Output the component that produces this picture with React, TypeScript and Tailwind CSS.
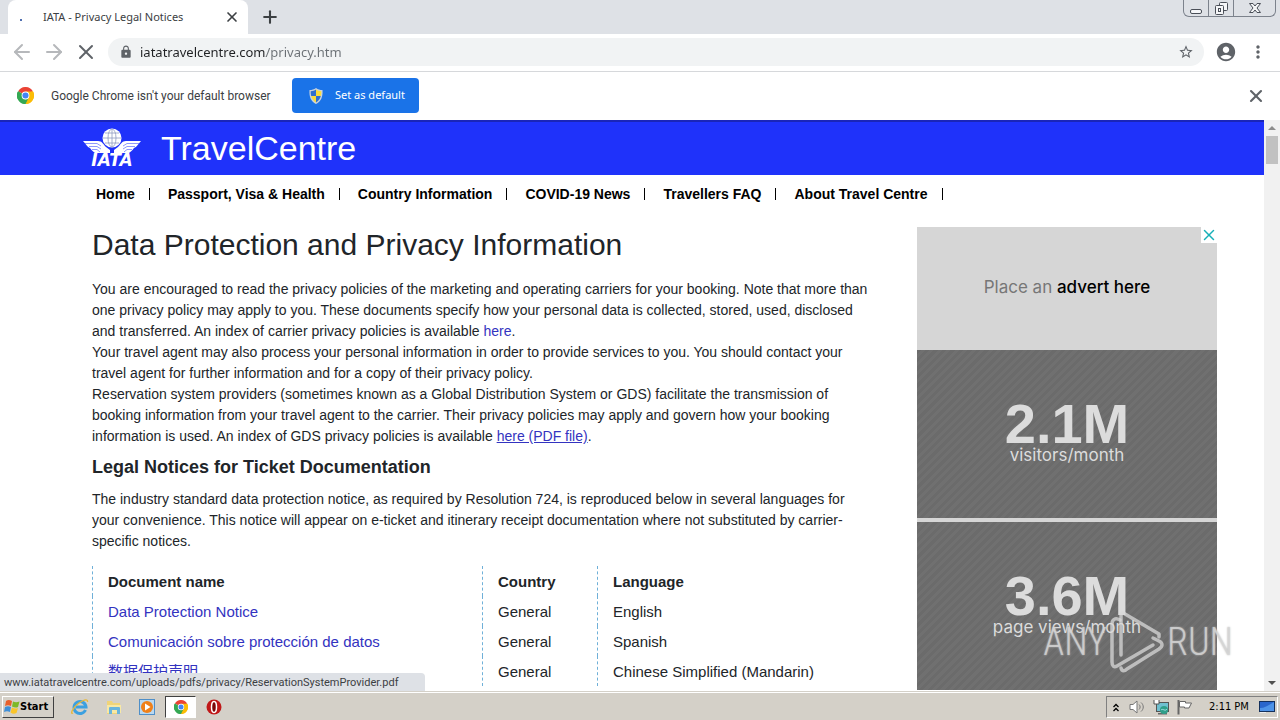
import { ArrowLeft, ArrowRight, Plus, X } from "lucide-react";
import { MdAccountCircle, MdLock, MdMoreVert, MdStarBorder } from "react-icons/md";

const navItems = [
  "Home",
  "Passport, Visa & Health",
  "Country Information",
  "COVID-19 News",
  "Travellers FAQ",
  "About Travel Centre",
];

const documents = [
  { name: "Data Protection Notice", country: "General", language: "English" },
  { name: "Comunicación sobre protección de datos", country: "General", language: "Spanish" },
  { name: "数据保护声明", country: "General", language: "Chinese Simplified (Mandarin)" },
];

function ChromeLogo({ className }: { className?: string }) {
  return (
    <svg viewBox="0 0 48 48" className={className} aria-hidden="true">
      <path d="M24 24 L3.2 12 A24 24 0 0 1 44.8 12 Z" fill="#ea4335" />
      <path d="M24 24 L44.8 12 A24 24 0 0 1 24 48 Z" fill="#fbbc05" />
      <path d="M24 24 L24 48 A24 24 0 0 1 3.2 12 Z" fill="#34a853" />
      <path d="M24 13 H45.3 A24 24 0 0 1 24 48 L33.5 29.5 Z" fill="#fbbc05" />
      <path d="M3.2 12 L14.5 29.5 L24 35 L33 30 L24 48 A24 24 0 0 1 3.2 12Z" fill="#34a853" />
      <circle cx="24" cy="24" r="11" fill="#fff" />
      <circle cx="24" cy="24" r="8.6" fill="#4285f4" />
    </svg>
  );
}

function ShieldIcon() {
  return (
    <svg viewBox="0 0 16 16" className="h-4 w-4" aria-hidden="true">
      <path d="M8 0 C10 1.5 12 2 14.5 2 C15 9 13 13.5 8 16 C3 13.5 1 9 1.5 2 C4 2 6 1.5 8 0Z" fill="#c9d3de" />
      <path d="M8 1.5 C6.5 2.6 4.8 3 2.7 3.2 C2.6 5 2.8 6.5 3.2 8 H8Z" fill="#2f6fd0" />
      <path d="M8 1.5 C9.5 2.6 11.2 3 13.3 3.2 C13.4 5 13.2 6.5 12.8 8 H8Z" fill="#f9dc3c" />
      <path d="M3.2 8 C4 11 5.5 13 8 14.5 V8Z" fill="#f9dc3c" />
      <path d="M12.8 8 C12 11 10.5 13 8 14.5 V8Z" fill="#2f6fd0" />
    </svg>
  );
}

function IataLogo() {
  return (
    <svg viewBox="0 0 58 42" className="h-[42px] w-[58px]" role="img" aria-label="IATA">
      <g fill="#fff">
        <path d="M0 14 H15 C19 14 20 17 23 20 L27 23 V26 H12 C9 24 8 22 7 21 C4 20 3 17 0 14Z" />
        <path d="M58 14 H43 C39 14 38 17 35 20 L31 23 V26 H46 C49 24 50 22 51 21 C54 20 55 17 58 14Z" />
        <circle cx="29" cy="11" r="9.5" />
      </g>
      <g fill="none" stroke="#1f32fa" strokeWidth="0.5">
        <path d="M2 16.5 H14 L18 19 M6 19.5 H14 L18 22 M9 22.5 H14 L17 25" />
        <path d="M56 16.5 H44 L40 19 M52 19.5 H44 L40 22 M49 22.5 H44 L41 25" />
      </g>
      <g fill="none" stroke="#8f9cc0" strokeWidth="0.8">
        <ellipse cx="29" cy="11" rx="4" ry="9" />
        <path d="M29 2 V20 M20 11 H38 M22 6 H36 M22 16 H36" />
      </g>
      <text
        x="29"
        y="39"
        textAnchor="middle"
        fill="#fff"
        fontFamily="DejaVu Sans, sans-serif"
        fontStyle="italic"
        fontWeight="bold"
        fontSize="17"
      >
        IATA
      </text>
    </svg>
  );
}

function WindowControls() {
  return (
    <div className="flex h-[17px] self-start rounded-b-md border border-t-0 border-[#7c828c] text-[#4a4f58]">
      <button aria-label="Minimize" className="flex w-[25px] items-center justify-center border-r border-[#7c828c]">
        <svg viewBox="0 0 13 13" className="h-[13px] w-[13px]">
          <rect x="0.5" y="7.5" width="11" height="4" rx="1.5" fill="#f5f6f8" stroke="currentColor" />
        </svg>
      </button>
      <button aria-label="Restore" className="flex w-[25px] items-center justify-center border-r border-[#7c828c]">
        <svg viewBox="0 0 13 13" className="h-[13px] w-[13px]" fill="#f5f6f8" stroke="currentColor">
          <rect x="4.5" y="0.5" width="8" height="8" rx="1" />
          <rect x="0.5" y="3.5" width="8" height="9" rx="1" />
          <rect x="3.5" y="6.5" width="2" height="3" />
        </svg>
      </button>
      <button aria-label="Close window" className="flex w-[41px] items-center justify-center">
        <svg viewBox="0 0 12 12" className="h-3 w-3" fill="#f5f6f8" stroke="currentColor">
          <path d="M0.5 1.5 H4 L6 4 L8 1.5 H11.5 L8 6 L11.5 10.5 H8 L6 8 L4 10.5 H0.5 L4 6Z" />
        </svg>
      </button>
    </div>
  );
}

function TabStrip() {
  return (
    <div className="flex h-[34px] bg-[#dee1e6] pr-1 pl-2">
      <div className="flex w-[240px] items-center rounded-t-lg bg-white pr-2 pl-3">
        <span className="mt-1.5 h-0.5 w-0.5 bg-[#4f6fb0]" />
        <span className="ml-[21px] flex-1 text-[11px] whitespace-nowrap text-[#3c4043]">
          IATA - Privacy Legal Notices
        </span>
        <button aria-label="Close tab" className="text-[#3c4043]">
          <X className="h-4 w-4" strokeWidth={2.5} />
        </button>
      </div>
      <button aria-label="New tab" className="ml-3 text-[#3c4043]">
        <Plus className="h-5 w-5" strokeWidth={2.5} />
      </button>
      <div className="flex-1" />
      <WindowControls />
    </div>
  );
}

function Toolbar() {
  return (
    <div className="flex h-[38px] items-center border-b border-[#d6d8db] bg-white pr-3 pb-px pl-2.5">
      <button aria-label="Back" className="text-[#b6b8bb]">
        <ArrowLeft className="h-6 w-6" />
      </button>
      <button aria-label="Forward" className="ml-2 text-[#b6b8bb]">
        <ArrowRight className="h-6 w-6" />
      </button>
      <button aria-label="Stop loading" className="ml-2 text-[#5f6368]">
        <X className="h-6 w-6" />
      </button>
      <div className="ml-2.5 flex h-7 flex-1 items-center rounded-full bg-[#f1f3f4] pr-2.5 pl-[11px]">
        <label htmlFor="address" aria-label="Address">
          <MdLock className="h-3.5 w-3.5 text-[#5f6368]" />
        </label>
        {/* host is darker than the path */}
        <input
          id="address"
          aria-label="Address"
          defaultValue="iatatravelcentre.com/privacy.htm"
          className="ml-[7px] h-6 min-w-0 flex-1 bg-[linear-gradient(90deg,#202124_126px,#6b7075_126px)] bg-clip-text text-[13px] text-transparent outline-none"
        />
        <button aria-label="Bookmark this page" className="text-[#5f6368]">
          <MdStarBorder className="h-4 w-4" />
        </button>
      </div>
      <button aria-label="Profile" className="ml-[11px] text-[#5f6368]">
        <MdAccountCircle className="h-[22px] w-[22px]" />
      </button>
      <button aria-label="Menu" className="ml-[11px] text-[#5f6368]">
        <MdMoreVert className="h-5 w-5" />
      </button>
    </div>
  );
}

function InfoBar() {
  return (
    <div className="flex h-12 items-center bg-white pr-3.5 pb-px pl-[17px]">
      <ChromeLogo className="h-[17px] w-[17px]" />
      <span className="ml-[17px] w-[229px] font-['Roboto',sans-serif] text-xs whitespace-nowrap text-[#3c4043]">
        Google Chrome isn't your default browser
      </span>
      <button className="ml-3 flex h-[35px] w-[127px] items-center gap-[11px] rounded bg-[#1a73e8] pl-4 text-[11px] text-white">
        <ShieldIcon />
        Set as default
      </button>
      <div className="flex-1" />
      <button aria-label="Dismiss" className="text-[#5f6368]">
        <X className="h-5 w-5" strokeWidth={2.5} />
      </button>
    </div>
  );
}

function SiteHeader() {
  return (
    <header>
      <div className="flex h-[55px] items-center border-t-2 border-[#1a25b8] bg-[#1f32fa] pb-px pl-[83px]">
        <IataLogo />
        <span className="ml-5 text-[34px] leading-10 text-white">TravelCentre</span>
      </div>
      <nav className="flex h-[38px] items-center gap-[18px] pl-[96px] text-sm font-bold text-black">
        {navItems.map((item) => (
          <a key={item} href="#" className="flex items-center gap-3.5 whitespace-nowrap">
            {item}
            <span className="h-3 w-px bg-black" />
          </a>
        ))}
      </nav>
    </header>
  );
}

function Article() {
  return (
    <main className="min-w-0 flex-1 text-sm leading-[21px] whitespace-nowrap text-[#212529]">
      <h1 className="pt-3.5 text-[30px] leading-9">Data Protection and Privacy Information</h1>
      <p className="mt-4">
        You are encouraged to read the privacy policies of the marketing and operating carriers for your booking. Note that more than
        <br />
        one privacy policy may apply to you. These documents specify how your personal data is collected, stored, used, disclosed
        <br />
        and transferred. An index of carrier privacy policies is available{" "}
        <a href="#" className="text-[#3333c0]">here</a>.
        <br />
        Your travel agent may also process your personal information in order to provide services to you. You should contact your
        <br />
        travel agent for further information and for a copy of their privacy policy.
        <br />
        Reservation system providers (sometimes known as a Global Distribution System or GDS) facilitate the transmission of
        <br />
        booking information from your travel agent to the carrier. Their privacy policies may apply and govern how your booking
        <br />
        information is used. An index of GDS privacy policies is available{" "}
        <a href="#" className="text-[#3333c0] underline">here (PDF file)</a>.
      </p>
      <h2 className="mt-2 text-lg leading-6 font-bold">Legal Notices for Ticket Documentation</h2>
      <p className="mt-2.5">
        The industry standard data protection notice, as required by Resolution 724, is reproduced below in several languages for
        <br />
        your convenience. This notice will appear on e-ticket and itinerary receipt documentation where not substituted by carrier-
        <br />
        specific notices.
      </p>
      <table className="mt-3.5 w-[790px] table-fixed text-left text-[15px]">
        <thead>
          <tr className="h-[30px]">
            <th className="w-[390px] border-l border-dashed border-[#6fb0d8] pl-[15px]">Document name</th>
            <th className="w-[115px] border-l border-dashed border-[#6fb0d8] pl-[15px]">Country</th>
            <th className="border-l border-dashed border-[#6fb0d8] pl-[15px]">Language</th>
          </tr>
        </thead>
        <tbody>
          {documents.map((doc) => (
            <tr key={doc.name} className="h-[30px]">
              <td className="border-l border-dashed border-[#6fb0d8] pl-[15px]">
                <a href="#" className="text-[#3333c0]">{doc.name}</a>
              </td>
              <td className="border-l border-dashed border-[#6fb0d8] pl-[15px]">{doc.country}</td>
              <td className="border-l border-dashed border-[#6fb0d8] pl-[15px]">{doc.language}</td>
            </tr>
          ))}
        </tbody>
      </table>
    </main>
  );
}

function AdStat({ value, label }: { value: string; label: string }) {
  return (
    <div className="flex h-[168px] flex-col items-center bg-[repeating-linear-gradient(135deg,#6b6b6b_0_3px,#707070_3px_6px)] pt-[51px] text-[#dcdcdc]">
      <span className="font-['Liberation_Sans',sans-serif] text-[56px] leading-[46px] font-bold">{value}</span>
      <span className="text-[17px] leading-4">{label}</span>
    </div>
  );
}

function Advert() {
  return (
    <aside className="relative mt-[14px] flex w-[300px] shrink-0 flex-col gap-1 self-start bg-[#d6d6d6] font-['Inter',sans-serif]">
      <button
        aria-label="Close advert"
        className="absolute top-0 right-0 flex h-4 w-4 items-center justify-center bg-white text-[#17b0b8]"
      >
        <X className="h-[18px] w-[18px] shrink-0" />
      </button>
      <p className="flex h-[119px] items-center justify-center pt-0.5 text-[17px] text-[#777]">
        <span>
          Place an <span className="font-medium text-black">advert here</span>
        </span>
      </p>
      <AdStat value="2.1M" label="visitors/month" />
      <AdStat value="3.6M" label="page views/month" />
    </aside>
  );
}

function Scrollbar() {
  return (
    <div className="flex w-4 shrink-0 flex-col items-center justify-between bg-[#f1f1f1] py-1.5" aria-hidden="true">
      <div className="flex flex-col items-center gap-1.5">
        <svg viewBox="0 0 8 4" className="h-1 w-2"><path d="M0 4 L4 0 L8 4Z" fill="#8c8c8c" /></svg>
        <div className="h-7 w-3 bg-[#c1c1c1]" />
      </div>
      <svg viewBox="0 0 8 4" className="h-1 w-2"><path d="M0 0 L4 4 L8 0Z" fill="#505050" /></svg>
    </div>
  );
}

function Watermark() {
  return (
    <div className="pointer-events-none absolute right-[47px] bottom-[18px] flex items-center gap-0.5 font-['Roboto_Condensed','Liberation_Sans_Narrow','Liberation_Sans',sans-serif] text-[38px] leading-none font-light text-[#d8d8d8]/75 [text-shadow:0_0_2px_#bbb]">
      <span>ANY</span>
      <svg
        viewBox="0 0 56 62"
        className="h-[62px] w-14"
        fill="none"
        stroke="#d8d8d8"
        strokeOpacity="0.75"
        strokeWidth="3.5"
        strokeLinejoin="round"
        strokeLinecap="round"
      >
        <path d="M12 44 V5 C12 2 14 1 16 3 L50 23 V26" />
        <path d="M11 9 C6 6 3 9 3 13 V51 C3 55 5 57 8 55 L44 34" />
        <path d="M12 57 C13 61 16 60 18 58 L50 38 C54 35 54 32 50 30 L44 27" />
      </svg>
      <span>RUN</span>
    </div>
  );
}

function WindowsLogo() {
  return (
    <svg viewBox="0 0 16 16" className="h-4 w-4" aria-hidden="true">
      <path d="M2 2 C4 0.5 6 1 8 2 L7 7 C5 6 3 6 1 7Z" fill="#e8602c" />
      <path d="M9 2.5 C11 3.5 13 3.5 15.5 2.5 L14 8 C12 9 10 8.5 8 7.5Z" fill="#7db928" />
      <path d="M1 8 C3 7 5 7 7 8 L6 13 C4 12 2 12 0 13Z" fill="#3f8fd8" />
      <path d="M8 8.5 C10 9.5 12 10 14 9 L12.5 14 C10.5 15 8.5 15 6.5 13.5Z" fill="#fac52a" />
    </svg>
  );
}

function Taskbar() {
  return (
    <footer className="flex h-7 shrink-0 items-center border-t border-white bg-[#d4d0c8] px-0.5 pt-px font-['DejaVu_Sans_Condensed','Noto_Sans',sans-serif] text-[11px] text-black">
      <button className="flex h-[22px] w-[52px] items-center border border-t-white border-r-[#404040] border-b-[#404040] border-l-white pl-px font-bold">
        <WindowsLogo />
        Start
      </button>
      <button aria-label="Internet Explorer" className="ml-[17px]">
        <svg viewBox="0 0 18 18" className="h-[18px] w-[18px]" fill="none">
          <path d="M14.5 12 A6 6 0 1 1 15 9 H5" stroke="#3ba0e0" strokeWidth="3" />
          <path d="M2 15 C-1 17 1 10 8 5 C14 1 17 1 16.5 4" stroke="#e8b83a" strokeWidth="1.3" />
        </svg>
      </button>
      <button aria-label="Explorer" className="ml-4">
        <svg viewBox="0 0 18 18" className="h-[18px] w-[18px]">
          <path d="M2 3 H7 L8 5 H15 V16 H2Z" fill="#f0d478" />
          <path d="M2 7 H16 V15 H2Z" fill="#f8e8a4" />
          <path d="M4 16 V10 C4 9 5 9 5 9 H14 C15 9 15 10 15 10 V16 H12 V12 H7 V16Z" fill="#69b4dc" />
        </svg>
      </button>
      <button aria-label="Media Player" className="ml-[15px]">
        <svg viewBox="0 0 18 18" className="h-[18px] w-[18px]">
          <rect x="1.5" y="1.5" width="15" height="15" fill="#b9d8f0" stroke="#4f8fc8" />
          <circle cx="9" cy="9" r="6" fill="#f08018" />
          <path d="M7 5.5 L12.5 9 L7 12.5Z" fill="#fff" />
        </svg>
      </button>
      <button
        aria-label="Google Chrome"
        className="ml-[9px] flex h-[22px] w-[31px] items-center justify-center border border-t-[#404040] border-r-white border-b-white border-l-[#404040] bg-white"
      >
        <ChromeLogo className="h-3.5 w-3.5" />
      </button>
      <button aria-label="Opera" className="ml-2.5">
        <svg viewBox="0 0 16 16" className="h-4 w-4">
          <circle cx="8" cy="8" r="7.5" fill="#c01818" />
          <ellipse cx="8" cy="8" rx="2.5" ry="5.5" fill="#7a0808" stroke="#fff" strokeWidth="1.5" />
        </svg>
      </button>
      <div className="flex-1" />
      <div className="flex h-[22px] w-[172px] items-center border border-t-[#808080] border-r-white border-b-white border-l-[#808080] pr-0.5 pl-1.5">
        <svg viewBox="0 0 6 9" className="h-[9px] w-1.5" fill="none" stroke="#000" strokeWidth="1.3">
          <path d="M0.5 4 L3 1.5 L5.5 4 M0.5 8 L3 5.5 L5.5 8" />
        </svg>
        <svg viewBox="0 0 16 16" className="ml-2.5 h-4 w-4" fill="#fff" stroke="#777">
          <path d="M1 5.5 H4 L8 2 V14 L4 10.5 H1Z" />
          <path d="M10 5.5 C11.5 7 11.5 9 10 10.5 M12 3.5 C15 6 15 10 12 12.5" fill="none" />
        </svg>
        <svg viewBox="0 0 16 16" className="ml-2 h-4 w-4">
          <rect x="3.5" y="3.5" width="12" height="9" fill="#6fc0d0" stroke="#555" />
          <rect x="5" y="14" width="9" height="1.5" fill="#666" />
          <path d="M1 1 V5 H6 V1 M3.5 5 V13" fill="#fff" stroke="#555" />
          <circle cx="11" cy="11" r="4" fill="#2f9f8a" />
          <path d="M8 11 C10 9 12 13 14 10" stroke="#a8e0e8" fill="none" />
        </svg>
        <svg viewBox="0 0 16 16" className="ml-2 h-4 w-4" fill="#fff" stroke="#666">
          <path d="M1.5 1 V15.5" strokeWidth="2" />
          <path d="M2.5 2.5 H8.5 V4 H14.5 L12 9 H7.5 V8 H2.5Z" />
        </svg>
        <span className="ml-4 flex-1 whitespace-nowrap">2:11 PM</span>
        <svg viewBox="0 0 16 14" className="h-3.5 w-4">
          <rect x="0.5" y="1.5" width="15" height="10" fill="#2a66cc" stroke="#14305c" />
          <path d="M1 8 C6 8 10 5 15 2 V11 H1Z" fill="#4f94e8" />
          <rect x="1" y="12" width="6" height="1" fill="#eee" />
        </svg>
      </div>
    </footer>
  );
}

export default function App() {
  return (
    <div className="flex h-screen flex-col overflow-hidden bg-white font-['Noto_Sans',sans-serif]">
      <TabStrip />
      <Toolbar />
      <InfoBar />
      <div className="relative flex min-h-0 flex-1 border-b border-[#d4d0c8]">
        <div className="min-w-0 flex-1 overflow-hidden bg-white font-['Liberation_Sans','Noto_Sans_CJK_SC',sans-serif]">
          <SiteHeader />
          <div className="flex pr-[47px] pl-[92px]">
            <Article />
            <Advert />
          </div>
        </div>
        <Scrollbar />
        <div className="absolute bottom-0 left-0 flex h-[18px] w-[425px] items-center rounded-tr bg-[#dee1e6] pt-0.5 pl-1 font-['Roboto',sans-serif] text-[11px] text-[#3c4043]">
          www.iatatravelcentre.com/uploads/pdfs/privacy/ReservationSystemProvider.pdf
        </div>
        <Watermark />
      </div>
      <Taskbar />
    </div>
  );
}
